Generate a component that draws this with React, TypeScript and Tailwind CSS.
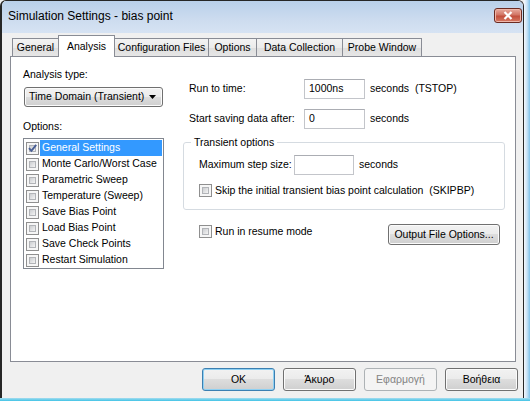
import React from "react";

const btnBase =
  "h-[23px] w-[73px] rounded-[3px] border flex items-center justify-center text-[10.5px]";
const btnNormal =
  "border-[#707070] text-black bg-[linear-gradient(to_bottom,#f2f2f2_0%,#ebebeb_50%,#dddddd_50%,#cfcfcf_100%)] shadow-[inset_0_0_0_1px_#fbfbfb]";

function Checkbox({ checked = false }: { checked?: boolean }) {
  return (
    <span className="relative w-[13px] h-[13px] shrink-0 border border-[#8f8f8f] bg-[#f6f6f6] p-[2px] flex">
      <span className="flex-1 border border-[#b2b4b8] bg-[linear-gradient(135deg,#cbcdd0,#f4f4f4)]" />
      {checked && (
        <svg className="absolute -left-px -top-px" width="13" height="13" viewBox="0 0 13 13">
          <path d="M3 6.2 L5.4 8.8 L10.2 2.8" fill="none" stroke="#4a5f95" strokeWidth="1.9" />
        </svg>
      )}
    </span>
  );
}

function TextBox({ value = "", w }: { value?: string; w: string }) {
  return (
    <div className={`${w} h-[20px] border border-[#c3c5ca] border-t-[#abadb3] bg-white flex items-center pl-[4px] text-black`}>
      {value}
    </div>
  );
}

const tabs = [
  { label: "General", w: "w-[47px]" },
  { label: "Analysis", w: "w-[57px]", active: true },
  { label: "Configuration Files", w: "w-[95px]" },
  { label: "Options", w: "w-[49px]" },
  { label: "Data Collection", w: "w-[87px]" },
  { label: "Probe Window", w: "w-[80px]" },
];

const options = [
  "General Settings",
  "Monte Carlo/Worst Case",
  "Parametric Sweep",
  "Temperature (Sweep)",
  "Save Bias Point",
  "Load Bias Point",
  "Save Check Points",
  "Restart Simulation",
];

export default function App() {
  return (
    <div className="w-[530px] h-[401px] flex flex-col overflow-hidden bg-[#f0f0f0] font-['Liberation_Sans',Arial,sans-serif] text-[10.5px] text-black">
      <div className="flex flex-1 min-h-0">
        {/* window */}
        <div className="w-[524px] flex flex-col border-l-2 border-t border-r border-[#262626] rounded-t-[6px] overflow-hidden">
          {/* Title bar */}
          <div className="h-[32px] shrink-0 flex items-center pl-[6px] pr-[1px] bg-[linear-gradient(to_bottom,#b9d0ea,#cddcef_60%,#d6e3f3)]">
            <span className="text-[12px] text-black mt-[-3px]">Simulation Settings - bias point</span>
            <div className="ml-auto mb-[3px] w-[28px] h-[15px] rounded-[3px] border border-[#6b2a21] bg-[linear-gradient(to_bottom,#e8ab9f,#d27565_45%,#c24f3d_55%,#d67a64)] flex items-center justify-center shadow-[inset_0_0_0_1px_#efb6a9]">
              <svg width="10" height="9" viewBox="0 0 10 9">
                <path d="M1.5 1 L8.5 8 M8.5 1 L1.5 8" stroke="#ffffff" strokeWidth="2.2" />
              </svg>
            </div>
          </div>

          {/* Body */}
          <div className="flex-1 bg-[#f0f0f0] flex flex-col pt-[2px]">
            <div className="ml-[8px] w-[506px]">
              {/* Tabs */}
              <div className="h-[21px] flex items-end pl-[2px]">
                {tabs.map((t, i) =>
                  t.active ? (
                    <div
                      key={t.label}
                      className={`${t.w} h-[22px] -mb-px relative z-10 ${i ? "-ml-px" : ""} border border-b-0 border-[#898c95] bg-white flex justify-center pt-[3px]`}
                    >
                      {t.label}
                    </div>
                  ) : (
                    <div
                      key={t.label}
                      className={`${t.w} h-[18px] ${i ? "-ml-px" : ""} border border-b-0 border-[#898c95] bg-[linear-gradient(to_bottom,#f3f3f3,#ebebeb_50%,#dedede_50%,#e6e6e6)] flex items-center justify-center`}
                    >
                      {t.label}
                    </div>
                  )
                )}
              </div>

              {/* Panel */}
              <div className="h-[306px] border border-[#898c95] bg-white flex pl-[12px]">
                {/* Left column */}
                <div className="w-[141px] flex flex-col pt-[11px]">
                  <div className="h-[14px] flex items-center">Analysis type:</div>
                  <div className="mt-[5px] ml-px w-[139px] h-[20px] rounded-[3px] border border-[#707070] bg-[linear-gradient(to_bottom,#f2f2f2_0%,#ebebeb_50%,#dddddd_50%,#cfcfcf_100%)] shadow-[inset_0_0_0_1px_#fbfbfb] flex items-center pl-[4px] pr-[6px]">
                    <span>Time Domain (Transient)</span>
                    <svg className="ml-auto" width="7" height="4" viewBox="0 0 7 4">
                      <path d="M0 0 H7 L3.5 4 Z" fill="#000" />
                    </svg>
                  </div>
                  <div className="mt-[13px] h-[14px] flex items-center">Options:</div>
                  <div className="mt-[4px] h-[131px] border border-[#828790] bg-white pt-px pl-[2px] pr-[1px]">
                    {options.map((o, i) => (
                      <div key={o} className="h-[16px] flex items-center">
                        <Checkbox checked={i === 0} />
                        <span
                          className={`flex-1 h-full flex items-center pl-[2px] ml-px ${
                            i === 0 ? "bg-[#3399ff] text-white" : ""
                          }`}
                        >
                          {o}
                        </span>
                      </div>
                    ))}
                  </div>
                </div>

                {/* Right column */}
                <div className="ml-[19px] w-[322px] flex flex-col pt-[22px]">
                  <div className="h-[20px] flex items-center pl-[6px]">
                    <span className="w-[115px]">Run to time:</span>
                    <TextBox value="1000ns" w="w-[61px]" />
                    <span className="ml-[5px] whitespace-pre">seconds  (TSTOP)</span>
                  </div>
                  <div className="mt-[10px] h-[20px] flex items-center pl-[6px]">
                    <span className="w-[115px]">Start saving data after:</span>
                    <TextBox value="0" w="w-[61px]" />
                    <span className="ml-[5px]">seconds</span>
                  </div>

                  {/* Group box */}
                  <div className="relative mt-[13px] h-[68px] rounded-[3px] border border-[#d5dbe1] pl-[15px] pt-[12px]">
                    <span className="absolute -top-[8px] left-[7px] bg-white px-[3px] leading-[14px]">
                      Transient options
                    </span>
                    <div className="h-[20px] flex items-center">
                      <span className="w-[95px]">Maximum step size:</span>
                      <TextBox w="w-[60px]" />
                      <span className="ml-[5px]">seconds</span>
                    </div>
                    <div className="mt-[9px] h-[13px] flex items-center">
                      <Checkbox />
                      <span className="ml-[3px] whitespace-pre">
                        Skip the initial transient bias point calculation  (SKIPBP)
                      </span>
                    </div>
                  </div>

                  <div className="mt-[14px] flex items-start pl-[16px] pr-[5px]">
                    <div className="mt-px h-[13px] flex items-center">
                      <Checkbox />
                      <span className="ml-[3px]">Run in resume mode</span>
                    </div>
                    <div className={`ml-auto h-[21px] w-[112px] rounded-[3px] border flex items-center justify-center ${btnNormal}`}>
                      Output File Options...
                    </div>
                  </div>
                </div>
              </div>
            </div>

            {/* Bottom buttons */}
            <div className="mt-[6px] flex justify-end gap-[8px] pr-[5px]">
              <div className={`${btnBase} border-[#3c7fb1] bg-[linear-gradient(to_bottom,#f2f2f2_0%,#ebebeb_50%,#dddddd_50%,#cfcfcf_100%)] shadow-[inset_0_0_0_1px_#8fd0f2]`}>
                OK
              </div>
              <div className={`${btnBase} ${btnNormal}`}>Άκυρο</div>
              <div className={`${btnBase} border-[#adb2b5] bg-[#f4f4f4] text-[#838383]`}>Εφαρμογή</div>
              <div className={`${btnBase} ${btnNormal}`}>Βοήθεια</div>
            </div>
          </div>
        </div>
        {/* frame beside the window */}
        <div className="w-[6px] bg-[linear-gradient(to_right,#f4f8fc,#c9e2f5_50%,#7cc0e8)]" />
      </div>
      <div className="h-[3px] shrink-0 bg-[linear-gradient(to_bottom,#a6dcef,#3fc3e6)]" />
    </div>
  );
}
